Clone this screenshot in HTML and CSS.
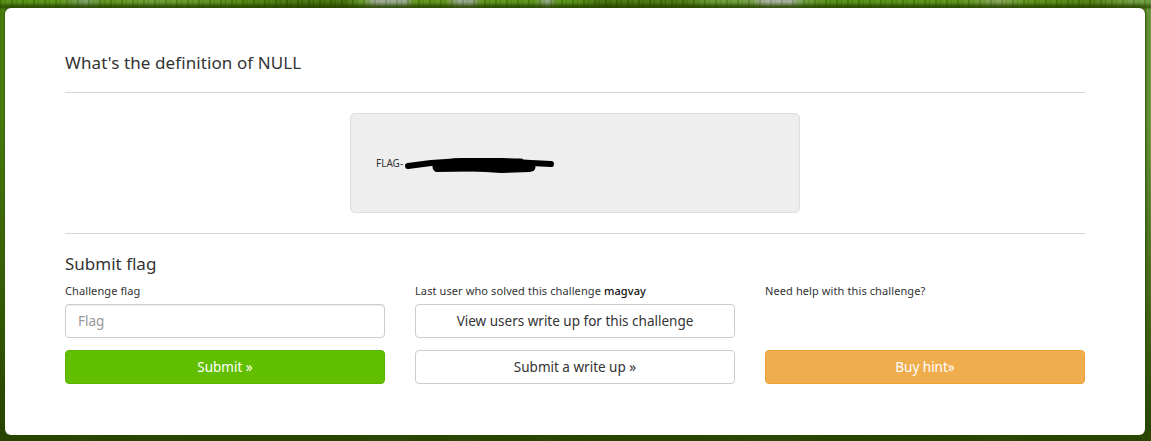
FILE: index.html
```html
<!DOCTYPE html>
<html lang="en">
<head>
<meta charset="utf-8">
<title>Challenge</title>
<link rel="stylesheet" href="styles.css">
</head>
<body>
<main class="card">
  <h2 class="title">What's the definition of NULL</h2>
  <hr class="rule">
  <div class="well">
    <p class="well-text">FLAG-</p>
    <svg class="scribble" width="170" height="24" viewBox="0 0 170 24" aria-hidden="true">
      <path d="M7 14 L30 11 L60 9 L100 9 L130 11 L150 12" fill="none" stroke="#000" stroke-width="6" stroke-linecap="round" stroke-linejoin="round"/>
      <path d="M36 15 L130 15" fill="none" stroke="#000" stroke-width="9" stroke-linecap="round"/>
      <path d="M52 9 L120 9" fill="none" stroke="#000" stroke-width="5" stroke-linecap="round"/>
      <path d="M36 17 L70 16 L100 18 L128 17" fill="none" stroke="#000" stroke-width="6" stroke-linecap="round" stroke-linejoin="round"/>
    </svg>
  </div>
  <hr class="rule">
  <h3 class="subtitle">Submit flag</h3>
  <div class="columns">
    <div class="column">
      <label class="label" for="flag">Challenge flag</label>
      <input class="field" id="flag" type="text" placeholder="Flag">
      <a class="btn btn-green">Submit »</a>
    </div>
    <div class="column">
      <p class="label">Last user who solved this challenge <span class="user">magvay</span></p>
      <a class="btn btn-white">View users write up for this challenge</a>
      <a class="btn btn-white">Submit a write up »</a>
    </div>
    <div class="column">
      <p class="label">Need help with this challenge?</p>
      <div class="spacer"></div>
      <a class="btn btn-orange">Buy hint»</a>
    </div>
  </div>
</main>
</body>
</html>
```
FILE: styles.css
```css
* { box-sizing: border-box; }
html, body { height: 100%; }
body {
  margin: 0;
  padding: 8px 6px 6px 5px;
  overflow: hidden;
  font-family: "Noto Sans", "DejaVu Sans", sans-serif;
  color: #333;
  background-color: #4a7a08;
  background-image:
    linear-gradient(180deg, rgba(38,66,0,0) 0, rgba(38,66,0,0) 2px, rgba(38,66,0,.75) 7px, rgba(38,66,0,0) 10px),
    linear-gradient(180deg, rgba(38,66,0,0) 0, rgba(38,66,0,0) 120px, rgba(38,66,0,.55) 300px, rgba(38,66,0,.95) 425px),
    repeating-linear-gradient(90deg, rgba(0,0,0,.1) 0 2px, rgba(255,255,255,.05) 2px 5px, rgba(0,0,0,.05) 5px 6px, rgba(255,255,255,.07) 6px 11px),
    linear-gradient(90deg, #4f8a0c 0, #55900f 60px, #73995a 85px, #578f10 105px, #66982a 150px, #5f9320 190px, #4b8008 250px, #3f6c04 300px, #3f6c04 345px, #5f9420 362px, #98a68c 375px, #93a486 405px, #558f10 415px, #5a9014 445px, #93a486 460px, #8c9f7e 472px, #558f10 482px, #558f10 535px, #8ea282 547px, #558f10 558px, #4f8a0c 576px, #3f6c04 600px, #447406 685px, #64962a 710px, #6c9a38 750px, #a0ac96 765px, #a0ac96 790px, #669830 805px, #4f8a0c 830px, #558f10 960px, #7fa04e 1000px, #558f10 1030px, #4a7a08 1090px, #6c9a38 1130px, #6c9a38 1151px);
}
.card {
  height: 427px;
  padding: 45px 60px 0;
  background: #fff;
  border-radius: 6px;
  box-shadow: 0 0 4px 1px #2a4800;
}
.title {
  margin: 0;
  height: 39px;
  font-size: 17px;
  line-height: 20px;
  letter-spacing: .1px;
  font-weight: 400;
  color: #333;
}
.rule {
  height: 1px;
  margin: 0;
  border: 0;
  background: #d5d5d5;
}
.well {
  position: relative;
  width: 450px;
  height: 100px;
  margin: 20px auto;
  padding: 0 25px;
  display: flex;
  align-items: center;
  background: #eee;
  border: 1px solid #ddd;
  border-radius: 5px;
}
.well-text {
  margin: 0;
  font-size: 10px;
  color: #333;
}
.scribble {
  position: absolute;
  left: 50px;
  top: 38px;
}
.subtitle {
  margin: 20px 0 0;
  font-size: 17px;
  line-height: 20px;
  font-weight: 400;
  color: #333;
}
.columns {
  display: grid;
  grid-template-columns: repeat(3, 320px);
  gap: 30px;
  margin-top: 9px;
}
.column {
  display: flex;
  flex-direction: column;
  gap: 12px;
}
.label {
  display: block;
  margin: 0 0 -6px;
  height: 15px;
  font-size: 11px;
  line-height: 16px;
  letter-spacing: .1px;
  color: #333;
}
.user { font-weight: 500; color: #111; }
.field, .btn {
  display: flex;
  align-items: center;
  justify-content: center;
  width: 320px;
  height: 34px;
  border-radius: 4px;
  font-family: inherit;
  font-size: 13.5px;
}
.field {
  padding: 0 12px;
  font-size: 13.5px;
  color: #555;
  background: #fff;
  border: 1px solid #ccc;
  box-shadow: inset 0 1px 1px rgba(0,0,0,.075);
}
.field::placeholder { color: #999; opacity: 1; }
.spacer { height: 34px; }
.btn { border: 1px solid transparent; }
.btn-green { background: #62bf00; border-color: #5cb300; color: #fff; }
.btn-white { background: #fff; border-color: #ccc; color: #333; }
.btn-orange { background: #f0ad4e; border-color: #eea236; color: #fff; }
```
